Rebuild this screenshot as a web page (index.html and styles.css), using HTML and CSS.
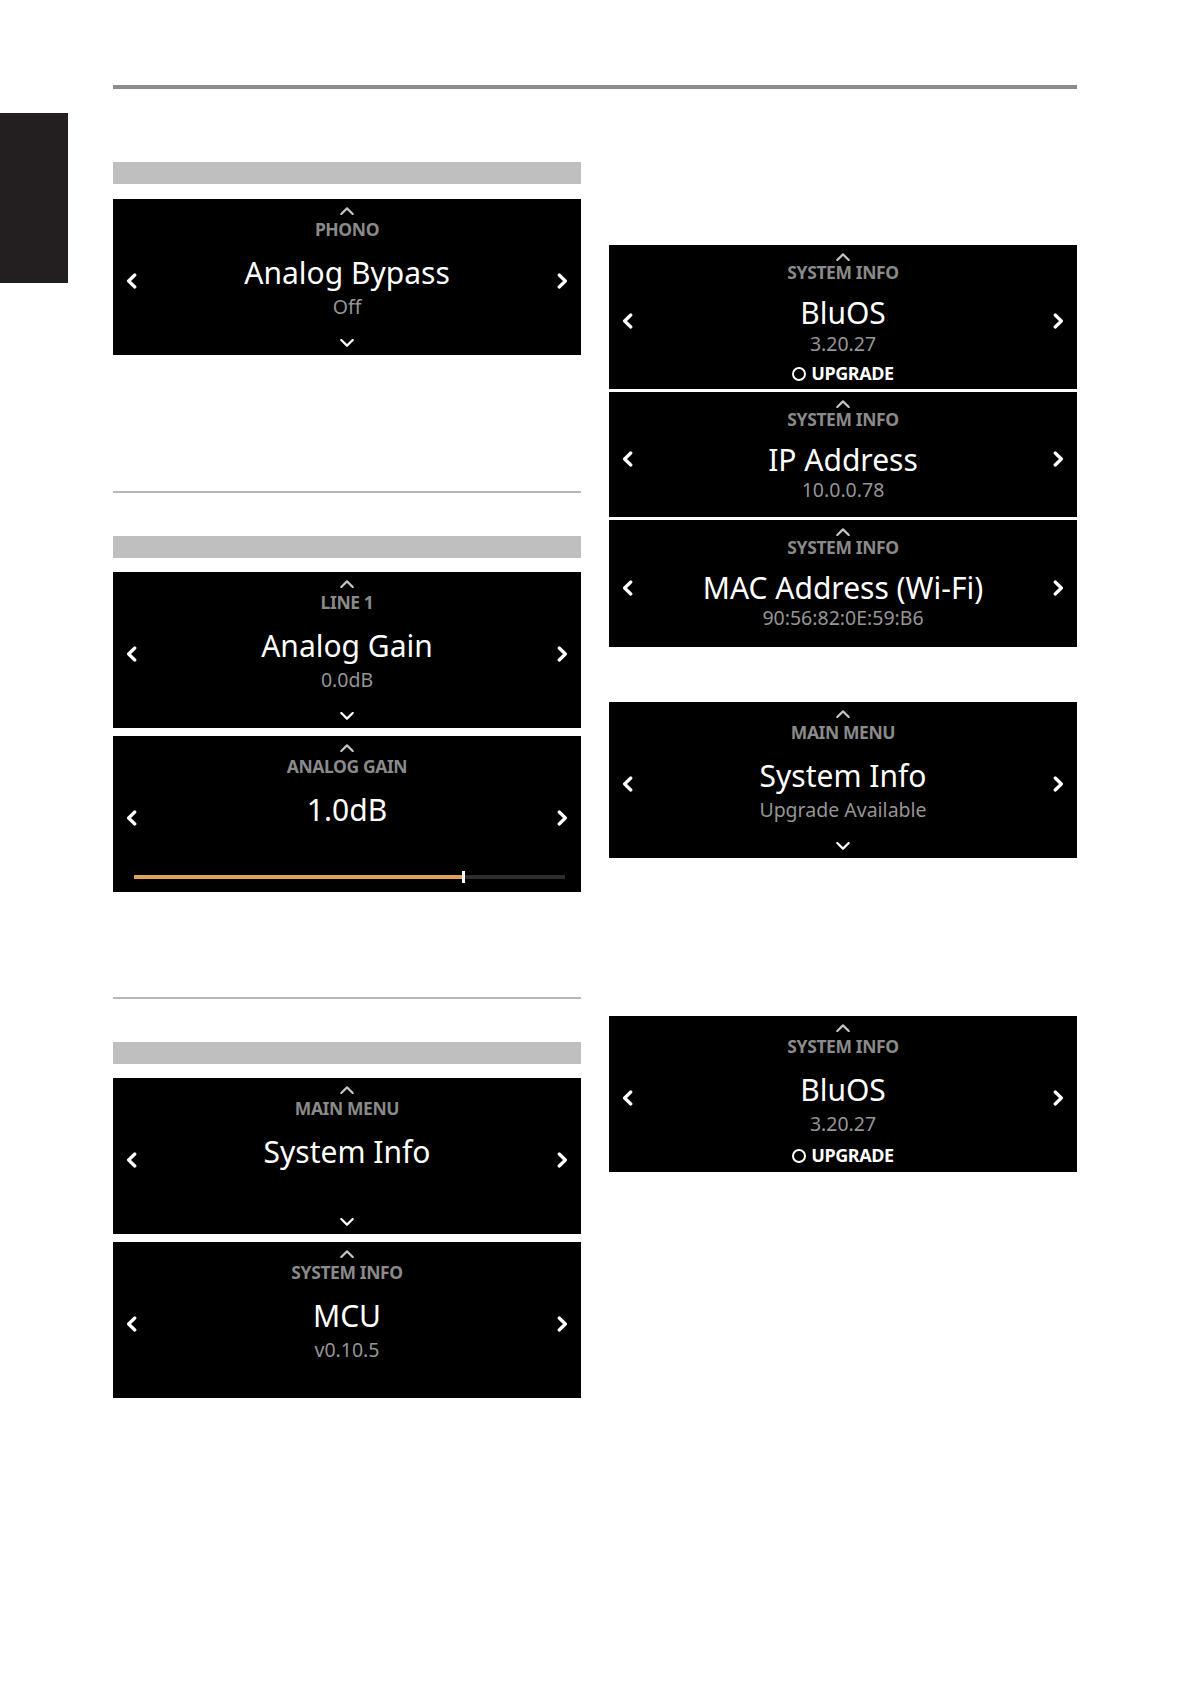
FILE: index.html
```html
<!DOCTYPE html>
<html lang="en">
<head>
<meta charset="utf-8">
<title>Settings screens</title>
<link rel="stylesheet" href="styles.css">
</head>
<body>
<div class="page">
  <div class="gutter"><div class="tab"></div></div>
  <div class="main">
    <div class="rule"></div>
    <div class="columns">
      <div class="col col-left">
        <div class="bar bar-1"></div>
        <div class="panel std">
          <svg class="chev chev-l" viewBox="0 0 11 16"><path d="M8.8 2 L2.6 8 L8.8 14"/></svg>
          <div class="center">
            <svg class="caret-up" viewBox="0 0 14 8"><path d="M1.3 7 L7 1.4 L12.7 7"/></svg>
            <div class="heading">PHONO</div>
            <div class="title">Analog Bypass</div>
            <div class="value">Off</div>
            <svg class="caret-down" viewBox="0 0 14 8"><path d="M1.3 1 L7 6.6 L12.7 1"/></svg>
          </div>
          <svg class="chev chev-r" viewBox="0 0 11 16"><path d="M2.2 2 L8.4 8 L2.2 14"/></svg>
        </div>
        <div class="thin thin-1"></div>
        <div class="bar bar-2"></div>
        <div class="panel std">
          <svg class="chev chev-l" viewBox="0 0 11 16"><path d="M8.8 2 L2.6 8 L8.8 14"/></svg>
          <div class="center">
            <svg class="caret-up" viewBox="0 0 14 8"><path d="M1.3 7 L7 1.4 L12.7 7"/></svg>
            <div class="heading">LINE 1</div>
            <div class="title">Analog Gain</div>
            <div class="value">0.0dB</div>
            <svg class="caret-down" viewBox="0 0 14 8"><path d="M1.3 1 L7 6.6 L12.7 1"/></svg>
          </div>
          <svg class="chev chev-r" viewBox="0 0 11 16"><path d="M2.2 2 L8.4 8 L2.2 14"/></svg>
        </div>
        <div class="panel std gain">
          <svg class="chev chev-l" viewBox="0 0 11 16"><path d="M8.8 2 L2.6 8 L8.8 14"/></svg>
          <div class="center">
            <svg class="caret-up" viewBox="0 0 14 8"><path d="M1.3 7 L7 1.4 L12.7 7"/></svg>
            <div class="heading">ANALOG GAIN</div>
            <div class="title">1.0dB</div>
          </div>
          <svg class="chev chev-r" viewBox="0 0 11 16"><path d="M2.2 2 L8.4 8 L2.2 14"/></svg>
          <div class="slider">
            <div class="fill" style="width: 76.1%"></div>
            <div class="handle"></div>
            <div class="rest"></div>
          </div>
        </div>
        <div class="thin thin-2"></div>
        <div class="bar bar-3"></div>
        <div class="panel std">
          <svg class="chev chev-l" viewBox="0 0 11 16"><path d="M8.8 2 L2.6 8 L8.8 14"/></svg>
          <div class="center">
            <svg class="caret-up" viewBox="0 0 14 8"><path d="M1.3 7 L7 1.4 L12.7 7"/></svg>
            <div class="heading">MAIN MENU</div>
            <div class="title">System Info</div>
            <svg class="caret-down" viewBox="0 0 14 8"><path d="M1.3 1 L7 6.6 L12.7 1"/></svg>
          </div>
          <svg class="chev chev-r" viewBox="0 0 11 16"><path d="M2.2 2 L8.4 8 L2.2 14"/></svg>
        </div>
        <div class="panel std panel-mcu">
          <svg class="chev chev-l" viewBox="0 0 11 16"><path d="M8.8 2 L2.6 8 L8.8 14"/></svg>
          <div class="center">
            <svg class="caret-up" viewBox="0 0 14 8"><path d="M1.3 7 L7 1.4 L12.7 7"/></svg>
            <div class="heading">SYSTEM INFO</div>
            <div class="title">MCU</div>
            <div class="value">v0.10.5</div>
          </div>
          <svg class="chev chev-r" viewBox="0 0 11 16"><path d="M2.2 2 L8.4 8 L2.2 14"/></svg>
        </div>
      </div>

      <div class="col col-right">
        <div class="panel compact p-bluos">
          <svg class="chev chev-l" viewBox="0 0 11 16"><path d="M8.8 2 L2.6 8 L8.8 14"/></svg>
          <div class="center">
            <svg class="caret-up" viewBox="0 0 14 8"><path d="M1.3 7 L7 1.4 L12.7 7"/></svg>
            <div class="heading">SYSTEM INFO</div>
            <div class="title">BluOS</div>
            <div class="value">3.20.27</div>
            <div class="upgrade"><span class="ring"></span>UPGRADE</div>
          </div>
          <svg class="chev chev-r" viewBox="0 0 11 16"><path d="M2.2 2 L8.4 8 L2.2 14"/></svg>
        </div>
        <div class="panel compact p-ip">
          <svg class="chev chev-l" viewBox="0 0 11 16"><path d="M8.8 2 L2.6 8 L8.8 14"/></svg>
          <div class="center">
            <svg class="caret-up" viewBox="0 0 14 8"><path d="M1.3 7 L7 1.4 L12.7 7"/></svg>
            <div class="heading">SYSTEM INFO</div>
            <div class="title">IP Address</div>
            <div class="value">10.0.0.78</div>
          </div>
          <svg class="chev chev-r" viewBox="0 0 11 16"><path d="M2.2 2 L8.4 8 L2.2 14"/></svg>
        </div>
        <div class="panel compact p-mac">
          <svg class="chev chev-l" viewBox="0 0 11 16"><path d="M8.8 2 L2.6 8 L8.8 14"/></svg>
          <div class="center">
            <svg class="caret-up" viewBox="0 0 14 8"><path d="M1.3 7 L7 1.4 L12.7 7"/></svg>
            <div class="heading">SYSTEM INFO</div>
            <div class="title">MAC Address (Wi-Fi)</div>
            <div class="value">90:56:82:0E:59:B6</div>
          </div>
          <svg class="chev chev-r" viewBox="0 0 11 16"><path d="M2.2 2 L8.4 8 L2.2 14"/></svg>
        </div>
        <div class="panel std p-menu">
          <svg class="chev chev-l" viewBox="0 0 11 16"><path d="M8.8 2 L2.6 8 L8.8 14"/></svg>
          <div class="center">
            <svg class="caret-up" viewBox="0 0 14 8"><path d="M1.3 7 L7 1.4 L12.7 7"/></svg>
            <div class="heading">MAIN MENU</div>
            <div class="title">System Info</div>
            <div class="value">Upgrade Available</div>
            <svg class="caret-down" viewBox="0 0 14 8"><path d="M1.3 1 L7 6.6 L12.7 1"/></svg>
          </div>
          <svg class="chev chev-r" viewBox="0 0 11 16"><path d="M2.2 2 L8.4 8 L2.2 14"/></svg>
        </div>
        <div class="panel std p-bluos2">
          <svg class="chev chev-l" viewBox="0 0 11 16"><path d="M8.8 2 L2.6 8 L8.8 14"/></svg>
          <div class="center">
            <svg class="caret-up" viewBox="0 0 14 8"><path d="M1.3 7 L7 1.4 L12.7 7"/></svg>
            <div class="heading">SYSTEM INFO</div>
            <div class="title">BluOS</div>
            <div class="value">3.20.27</div>
            <div class="upgrade"><span class="ring"></span>UPGRADE</div>
          </div>
          <svg class="chev chev-r" viewBox="0 0 11 16"><path d="M2.2 2 L8.4 8 L2.2 14"/></svg>
        </div>
      </div>
    </div>
  </div>
</div>
</body>
</html>
```
FILE: styles.css
```css
* { box-sizing: border-box; }
html, body { margin: 0; padding: 0; background: #ffffff; }
body {
  width: 1191px;
  min-height: 1684px;
  font-family: "Noto Sans", "Open Sans", sans-serif;
}
.page { display: flex; }
.gutter { width: 113px; padding-top: 113px; flex: none; }
.tab { width: 68px; height: 170px; background: #231f20; }
.main { width: 964px; padding-top: 85px; }
.rule { height: 4px; background: #8c8c8c; }
.columns {
  display: grid;
  grid-template-columns: 468px 468px;
  column-gap: 28px;
  align-items: start;
}
.col { display: flex; flex-direction: column; }

.bar { height: 22px; background: #bfbfbf; }
.bar-1 { margin-top: 73px; margin-bottom: 15px; }
.bar-2 { margin-top: 43px; margin-bottom: 14px; }
.bar-3 { margin-top: 43px; margin-bottom: 14px; }
.thin { height: 2px; background: #b8b8b8; }
.thin-1 { margin-top: 136px; }
.thin-2 { margin-top: 105px; }

.col-left .panel + .panel { margin-top: 8px; }
.col-left .panel-mcu { margin-top: 9px; }

.panel {
  background: #000;
  display: grid;
  grid-template-columns: 38px 1fr 38px;
  grid-template-rows: 1fr;
  color: #fff;
}
.std { height: 156px; }
.p-bluos { height: 144px; margin-top: 156px; }
.p-ip { height: 125px; margin-top: 3px; }
.p-mac { height: 127px; margin-top: 3px; }
.p-menu { margin-top: 55px; }
.p-bluos2 { margin-top: 158px; }

.chev {
  width: 11px;
  height: 16px;
  align-self: center;
  margin-top: 8px;
  fill: none;
  stroke: #fff;
  stroke-width: 3.2;
  stroke-linecap: round;
  stroke-linejoin: round;
  grid-row: 1 / -1;
}
.chev-l { grid-column: 1; justify-self: start; margin-left: 13px; }
.chev-r { grid-column: 3; justify-self: end; margin-right: 13px; }

.center {
  grid-column: 2;
  grid-row: 1;
  display: flex;
  flex-direction: column;
  align-items: center;
  padding-top: 8px;
  padding-bottom: 8px;
  min-height: 0;
}
.caret-up, .caret-down {
  width: 14px;
  height: 8px;
  flex: none;
  fill: none;
  stroke-width: 2.2;
  stroke-linecap: round;
  stroke-linejoin: round;
}
.caret-up { stroke: #c4c4c4; }
.caret-down { stroke: #ffffff; margin-top: auto; }

.heading {
  font-size: 17.5px;
  font-weight: 700;
  line-height: 20px;
  letter-spacing: -0.4px;
  color: #8a8a8a;
  margin-top: 4px;
  white-space: nowrap;
}
.title {
  font-size: 30px;
  line-height: 36px;
  margin-top: 16px;
  color: #fff;
  white-space: nowrap;
}
.value {
  font-size: 19.5px;
  line-height: 24px;
  margin-top: 4px;
  color: #959595;
  white-space: nowrap;
}

.compact .heading { margin-top: 1px; }
.compact .title { margin-top: 12.5px; }
.compact .value { margin-top: 0.5px; }
.p-bluos .value { margin-top: 1.5px; }

.upgrade {
  display: flex;
  align-items: center;
  gap: 5px;
  font-size: 18px;
  font-weight: 700;
  line-height: 20px;
  letter-spacing: -0.4px;
  color: #fff;
  margin-top: 7px;
}
.p-bluos2 .upgrade { margin-top: 9px; }
.ring {
  width: 14px;
  height: 14px;
  border: 2px solid #fff;
  border-radius: 50%;
  margin-top: 1px;
}

.gain { grid-template-rows: 1fr auto; }
.gain .slider {
  grid-column: 1 / -1;
  grid-row: 2;
  display: flex;
  align-items: center;
  height: 12px;
  margin: 0 16px 9px 21px;
}
.fill { height: 4px; background: #dea35a; flex: none; }
.handle { width: 3px; height: 12px; background: #fff; flex: none; }
.rest { height: 4px; background: #2e2e2e; flex: 1; }
```
